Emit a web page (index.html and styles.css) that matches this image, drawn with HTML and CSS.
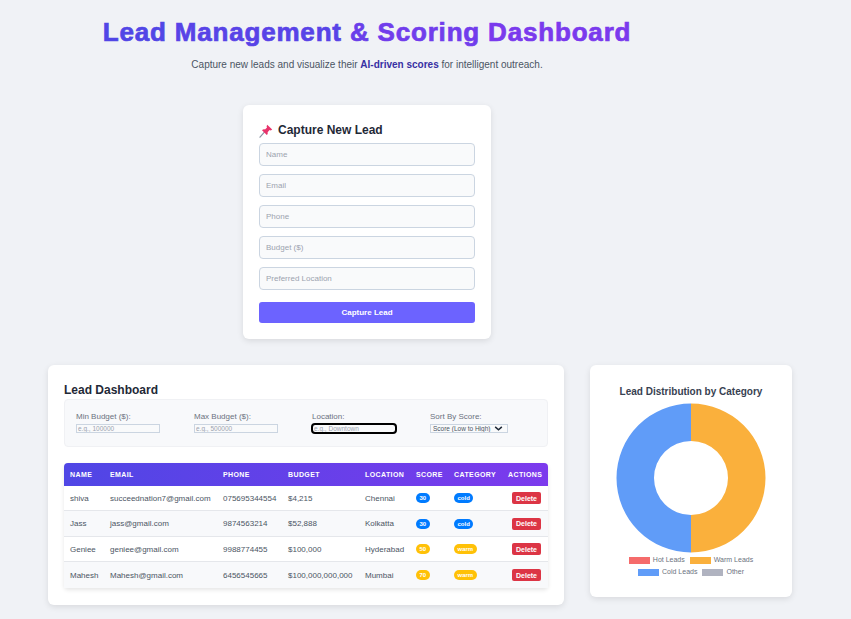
FILE: index.html
```html
<!DOCTYPE html>
<html lang="en">
<head>
    <meta charset="UTF-8">
    <meta name="viewport" content="width=device-width, initial-scale=1.0">
    <title>Lead Management &amp; Scoring Dashboard</title>
    <link rel="stylesheet" href="styles.css">
</head>
<body>
    <div class="top">
        <header class="hero">
            <h1><span class="w1">Lead</span> <span class="w2">Management</span> <span class="w3">&amp;</span> <span class="w4">Scoring</span> <span class="w5">Dashboard</span></h1>
            <p>Capture new leads and visualize their <strong>AI-driven scores</strong> for intelligent outreach.</p>
        </header>

        <section class="card lead-form">
            <h2>
                <svg class="pin" viewBox="0 0 14 14" width="14" height="14">
                    <path d="M1 13.2 L5.4 8.2" stroke="#8a93a3" stroke-width="1.2" stroke-linecap="round"/>
                    <path d="M8.2 0.8 L13.2 5.6 L11.8 6.4 L10.6 6 L8.6 8.2 C9 9.4 8.6 10.4 7.8 11 L3 6.2 C3.8 5.4 4.8 5 6 5.4 L8 3.4 L7.6 2.2 Z" fill="#e8336b"/>
                </svg>
                Capture New Lead
            </h2>
            <form>
                <input type="text" placeholder="Name">
                <input type="text" placeholder="Email">
                <input type="text" placeholder="Phone">
                <input type="text" placeholder="Budget ($)">
                <input type="text" placeholder="Preferred Location">
                <button type="button" class="submit">Capture Lead</button>
            </form>
        </section>
    </div>

    <div class="bottom">
        <section class="card dashboard">
            <h2>Lead Dashboard</h2>
            <div class="filters">
                <div class="filter">
                    <label>Min Budget ($):</label>
                    <input type="text" placeholder="e.g., 100000">
                </div>
                <div class="filter">
                    <label>Max Budget ($):</label>
                    <input type="text" placeholder="e.g., 500000">
                </div>
                <div class="filter">
                    <label>Location:</label>
                    <input type="text" class="focused" placeholder="e.g., Downtown">
                </div>
                <div class="filter">
                    <label>Sort By Score:</label>
                    <select>
                        <option>Score (Low to High)</option>
                    </select>
                </div>
            </div>

            <table class="leads">
                <colgroup>
                    <col class="c-name"><col class="c-email"><col class="c-phone"><col class="c-budget">
                    <col class="c-location"><col class="c-score"><col class="c-category"><col class="c-actions">
                </colgroup>
                <thead>
                    <tr>
                        <th>Name</th><th>Email</th><th>Phone</th><th>Budget</th>
                        <th>Location</th><th>Score</th><th>Category</th><th>Actions</th>
                    </tr>
                </thead>
                <tbody>
                    <tr>
                        <td>shiva</td><td>succeednation7@gmail.com</td><td>075695344554</td><td>$4,215</td><td>Chennai</td>
                        <td><span class="badge cold">30</span></td><td><span class="badge cold">cold</span></td>
                        <td><button type="button" class="delete">Delete</button></td>
                    </tr>
                    <tr class="tall">
                        <td>Jass</td><td>jass@gmail.com</td><td>9874563214</td><td>$52,888</td><td>Kolkatta</td>
                        <td><span class="badge cold">30</span></td><td><span class="badge cold">cold</span></td>
                        <td><button type="button" class="delete">Delete</button></td>
                    </tr>
                    <tr>
                        <td>Geniee</td><td>geniee@gmail.com</td><td>9988774455</td><td>$100,000</td><td>Hyderabad</td>
                        <td><span class="badge warm">50</span></td><td><span class="badge warm">warm</span></td>
                        <td><button type="button" class="delete">Delete</button></td>
                    </tr>
                    <tr class="tall">
                        <td>Mahesh</td><td>Mahesh@gmail.com</td><td>6456545665</td><td>$100,000,000,000</td><td>Mumbai</td>
                        <td><span class="badge warm">70</span></td><td><span class="badge warm">warm</span></td>
                        <td><button type="button" class="delete">Delete</button></td>
                    </tr>
                </tbody>
            </table>
        </section>

        <section class="card chart">
            <h3>Lead Distribution by Category</h3>
            <svg class="donut" viewBox="0 0 150 150" width="150" height="150">
                <path d="M75 0.5 A74.5 74.5 0 0 1 75 149.5 L75 112 A37 37 0 0 0 75 38 Z" fill="#fab03c"/>
                <path d="M75 0.5 A74.5 74.5 0 0 0 75 149.5 L75 112 A37 37 0 0 1 75 38 Z" fill="#609cf8"/>
            </svg>
            <div class="legend">
                <span class="key"><i class="hot"></i>Hot Leads</span>
                <span class="key"><i class="warm"></i>Warm Leads</span>
                <span class="key"><i class="cold"></i>Cold Leads</span>
                <span class="key"><i class="other"></i>Other</span>
            </div>
        </section>
    </div>
</body>
</html>
```

FILE: styles.css
```css
body {
    font-family: "Liberation Sans", Arial, sans-serif;
    margin: 0;
    padding: 0;
    background-color: #f0f2f6;
    color: #374151;
}
.top {
    width: 734px;
}
.hero {
    text-align: center;
    padding-top: 17px;
}
.hero h1 {
    margin: 0;
    font-size: 26px;
    line-height: 30px;
    font-weight: 700;
    letter-spacing: 0.82px;
    -webkit-text-stroke-width: 0.7px;
}
/* the title runs from indigo to violet, one colour per word */
.w1 { color: #5146e6; -webkit-text-stroke-color: #5146e6; }
.w2 { color: #5843e7; -webkit-text-stroke-color: #5843e7; }
.w3 { color: #6a3fea; -webkit-text-stroke-color: #6a3fea; }
.w4 { color: #713dec; -webkit-text-stroke-color: #713dec; }
.w5 { color: #7a3aed; -webkit-text-stroke-color: #7a3aed; }
.hero p {
    margin: 12px 0 0;
    font-size: 10px;
    line-height: 12px;
    color: #4b5563;
}
.hero strong {
    color: #3730a3;
}
.card {
    background-color: #fff;
    border-radius: 6px;
    box-shadow: 0 2px 6px rgba(0,0,0,0.1);
    box-sizing: border-box;
}
.lead-form {
    width: 248px;
    height: 234px;
    margin: 34px auto 0;
    padding: 18px 16px;
}
.lead-form h2 {
    margin: 0 0 5px;
    font-size: 12px;
    line-height: 15px;
    font-weight: 700;
    color: #1f2937;
    display: flex;
    align-items: center;
    gap: 5px;
}
.pin {
    flex: none;
}
.lead-form form {
    display: flex;
    flex-direction: column;
    gap: 8px;
}
.lead-form input {
    box-sizing: border-box;
    width: 216px;
    height: 23px;
    padding: 0 6px;
    font-family: inherit;
    font-size: 8px;
    background-color: #f9fafb;
    border: 1px solid #cbd5e1;
    border-radius: 4px;
}
.lead-form input::placeholder,
.filter input::placeholder {
    color: #9ca3af;
}
.submit {
    margin-top: 4px;
    width: 216px;
    height: 21px;
    border: none;
    border-radius: 3px;
    background-color: #6c63ff;
    color: #fff;
    font-family: inherit;
    font-size: 8px;
    font-weight: 700;
}
.bottom {
    display: flex;
    align-items: flex-start;
    gap: 26px;
    padding: 26px 0 14px 48px;
}
.dashboard {
    width: 516px;
    height: 240px;
    padding: 18px 16px;
}
.dashboard h2 {
    margin: 0 0 1px;
    font-size: 12px;
    line-height: 15px;
    font-weight: 700;
    color: #1f2937;
}
.filters {
    display: grid;
    grid-template-columns: repeat(4, 118px);
    height: 48px;
    box-sizing: border-box;
    padding: 12px 11px 0;
    background-color: #f8f9fb;
    border: 1px solid #f0f1f4;
    border-radius: 4px;
}
.filter label {
    display: block;
    font-size: 8px;
    line-height: 10px;
    color: #6b7280;
    margin-bottom: 2px;
}
.filter input {
    box-sizing: border-box;
    display: block;
    width: 84px;
    height: 9px;
    padding: 0 1px;
    font-family: inherit;
    font-size: 6.5px;
    background-color: #f9fafb;
    border: 1px solid #cbd5e1;
    border-radius: 0;
}
.filter input.focused {
    outline: 2px solid #000;
    outline-offset: -1px;
    border-radius: 3px;
}
.filter select {
    display: block;
    box-sizing: border-box;
    width: 78px;
    height: 9px;
    padding: 0 0 0 2px;
    appearance: none;
    font-family: inherit;
    font-size: 6.5px;
    color: #4b5563;
    background: #f9fafb url("data:image/svg+xml,%3Csvg xmlns='http://www.w3.org/2000/svg' viewBox='0 0 10 6'%3E%3Cpath d='M1 1l4 3.5L9 1' fill='none' stroke='%231f2937' stroke-width='1.8'/%3E%3C/svg%3E") no-repeat right 4px center / 9px 5px;
    border: 1px solid #cbd5e1;
}
.leads {
    width: 484px;
    margin-top: 16px;
    border-collapse: separate;
    border-spacing: 0;
    table-layout: fixed;
    border-radius: 4px;
    box-shadow: 0 2px 4px rgba(0,0,0,0.1);
}
.c-name { width: 40px; }
.c-email { width: 113px; }
.c-phone { width: 65px; }
.c-budget { width: 77px; }
.c-location { width: 51px; }
.c-score { width: 38px; }
.c-category { width: 54px; }
.c-actions { width: 46px; }
.leads thead tr {
    background: linear-gradient(90deg, #4f46e5, #7c3aed);
}
.leads th {
    height: 23px;
    padding: 0 0 0 6px;
    text-align: left;
    font-size: 7px;
    font-weight: 700;
    letter-spacing: 0.4px;
    text-transform: uppercase;
    color: #fff;
    white-space: nowrap;
}
.leads th:first-child {
    border-top-left-radius: 4px;
}
.leads th:last-child {
    border-top-right-radius: 4px;
}
.leads td {
    height: 25px;
    box-sizing: border-box;
    padding: 0 0 0 6px;
    font-size: 8px;
    color: #4b5563;
    white-space: nowrap;
    border-bottom: 1px solid #e5e7eb;
}
.leads tr.tall td {
    height: 26px;
}
.leads tbody tr:nth-child(even) {
    background-color: #f8f9fb;
}
.leads tbody tr:last-child td {
    border-bottom: none;
}
.badge {
    display: inline-block;
    padding: 0 3.5px;
    font-size: 6px;
    line-height: 10px;
    font-weight: 700;
    color: #fff;
    border-radius: 6px;
}
.badge.cold {
    background-color: #007bff;
}
.badge.warm {
    background-color: #ffc107;
}
.delete {
    display: block;
    width: 29px;
    height: 12px;
    margin-left: 4px;
    padding: 0;
    border: none;
    border-radius: 2px;
    background-color: #dc3545;
    color: #fff;
    font-family: inherit;
    font-size: 7px;
    font-weight: 700;
}
.chart {
    width: 202px;
    height: 232px;
    padding: 21px 0 0;
    display: flex;
    flex-direction: column;
    align-items: center;
}
.chart h3 {
    margin: 0 0 6px;
    font-size: 10px;
    line-height: 11px;
    font-weight: 700;
    color: #374151;
}
.donut {
    display: block;
}
.legend {
    width: 150px;
    margin-top: 3px;
    display: flex;
    flex-wrap: wrap;
    justify-content: center;
    gap: 4px 5px;
}
.key {
    display: flex;
    align-items: center;
    gap: 3px;
    font-size: 7px;
    line-height: 8px;
    color: #6b7280;
}
.key i {
    display: block;
    width: 21px;
    height: 7px;
}
.key .hot { background-color: #f56b6b; }
.key .warm { background-color: #fab03c; }
.key .cold { background-color: #609cf8; }
.key .other { background-color: #b0b3c0; }
```
